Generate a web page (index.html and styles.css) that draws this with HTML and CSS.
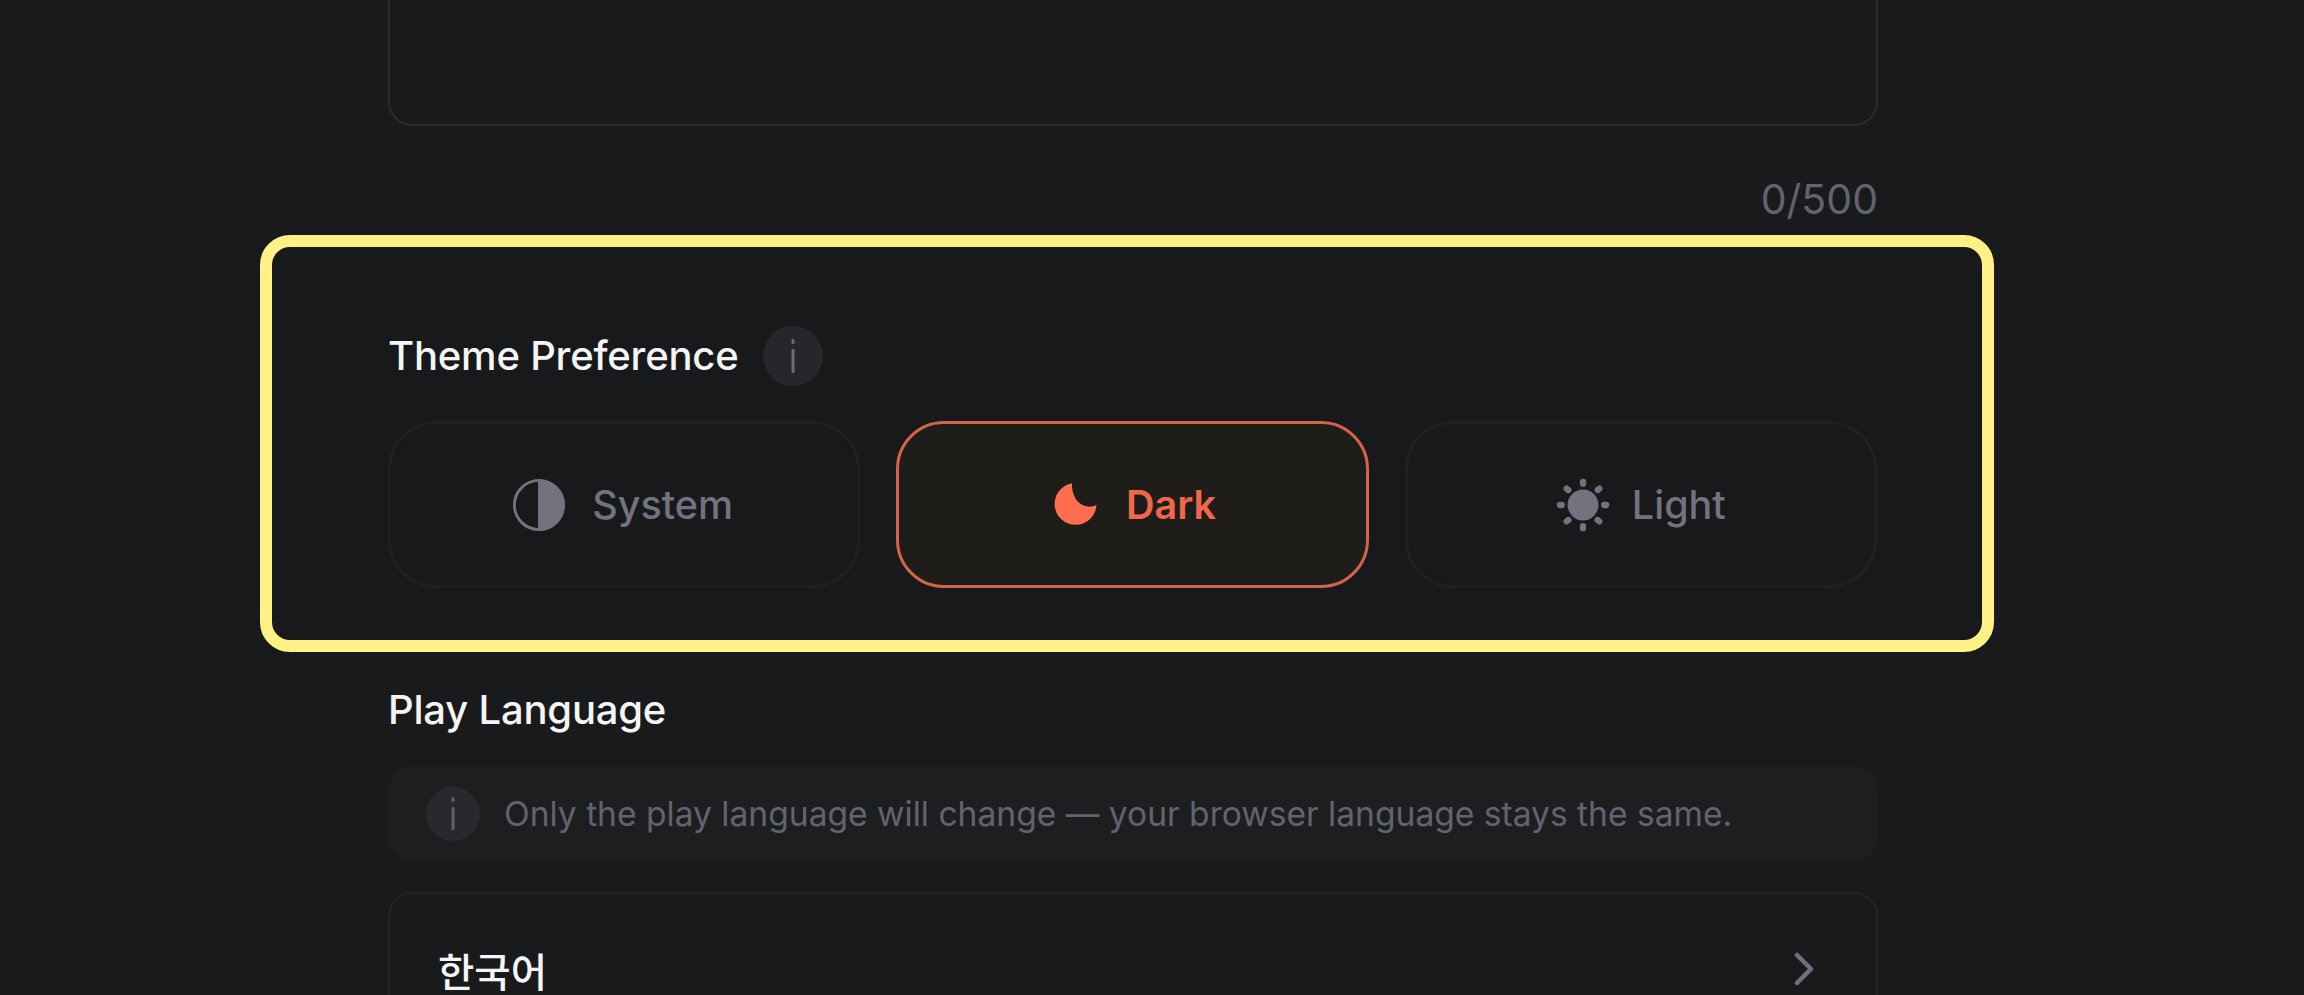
FILE: index.html
```html
<!DOCTYPE html>
<html lang="en">
<head>
  <meta charset="UTF-8" />
  <title>Settings</title>
  <link rel="stylesheet" href="styles.css">
</head>
<body>
  <div class="page">
    <div class="textbox"></div>
    <div class="counter">0/500</div>

    <section class="highlight">
      <div class="label-row">
        <h3 class="label">Theme Preference</h3>
        <span class="info-dot">
          <svg width="6" height="34" viewBox="0 0 6 34"><rect x="1.5" y="0" width="3" height="5" rx="1.5" fill="#6a6b78"/><rect x="1.5" y="10" width="3" height="24" rx="1" fill="#6a6b78"/></svg>
        </span>
      </div>
      <div class="themes">
        <button class="theme">
          <svg width="54" height="56" viewBox="0 0 56 56">
            <circle cx="28" cy="28" r="25.5" fill="none" stroke="#72737f" stroke-width="3"/>
            <path d="M28 2.5A25.5 25.5 0 0 1 28 53.5Z" fill="#72737f" stroke="#72737f" stroke-width="2"/>
          </svg>
          System
        </button>
        <button class="theme active">
          <svg width="54" height="56" viewBox="-3 0 56 56">
            <path d="M24 5.5A21.7 21.7 0 1 0 49.3 28C43 31 35.5 30 30.5 25C26 20.5 23.5 12 24 5.5Z" fill="#ff6e4f"/>
          </svg>
          Dark
        </button>
        <button class="theme light">
          <svg width="54" height="56" viewBox="0 0 56 56" fill="none" stroke="#72737f" stroke-width="6.5" stroke-linecap="round">
            <circle cx="28" cy="28" r="16" fill="#72737f" stroke="none"/>
            <path d="M28 4V6M28 50V52M4 28H6M50 28H52M11 11L12.8 12.4M45 11L43.2 12.4M11 45L12.8 43.6M45 45L43.2 43.6"/>
          </svg>
          Light
        </button>
      </div>
    </section>

    <h3 class="label play-label">Play Language</h3>

    <div class="notice">
      <span class="info-dot small">
        <svg width="6" height="33" viewBox="0 0 6 33"><rect x="1.5" y="0" width="3" height="5" rx="1.5" fill="#5e5f6b"/><rect x="1.5" y="10" width="3" height="23" rx="1" fill="#5e5f6b"/></svg>
      </span>
      <p>Only the play language will change — your browser language stays the same.</p>
    </div>

    <div class="lang-row">
      <span class="lang-name" lang="ko">한국어</span>
      <svg width="20" height="34" viewBox="0 0 20 34" fill="none" stroke="#6f707c" stroke-width="4.5" stroke-linecap="round" stroke-linejoin="round"><path d="M3 3L17 17L3 31"/></svg>
    </div>
  </div>
</body>
</html>
```

FILE: styles.css
```css
* { box-sizing: border-box; }

html, body {
  margin: 0;
  height: 995px;
  overflow: hidden;
  background: #191a1c;
}

body {
  font-family: Inter, "Noto Sans CJK KR", sans-serif;
  color: #f5f5f6;
}

.page {
  width: 1490px;
  margin-left: 388px;
}

.textbox {
  height: 166px;
  margin-top: -40px;
  border: 2px solid #2a2b2e;
  border-radius: 24px;
}

.counter {
  margin-top: 49px;
  height: 44px;
  line-height: 48px;
  text-align: right;
  font-size: 41px;
  color: #62636e;
}

.highlight {
  margin: 16px -116px 0 -128px;
  padding: 79px 105px 52px 116px;
  border: 12px solid #fff185;
  border-radius: 30px;
  background: #18191b;
}

.label-row {
  display: flex;
  align-items: center;
  gap: 25px;
  height: 60px;
}

.label {
  margin: 0;
  font-size: 40px;
  line-height: 48px;
  font-weight: 500;
  letter-spacing: -0.2px;
}

.info-dot {
  display: flex;
  align-items: center;
  justify-content: center;
  flex: none;
  width: 60px;
  height: 60px;
  border-radius: 50%;
  background: #26272b;
}

.info-dot.small {
  width: 54px;
  height: 54px;
  background: #28292d;
}

.themes {
  display: grid;
  grid-template-columns: repeat(3, 1fr);
  gap: 36px;
  margin-top: 35px;
}

.theme {
  display: flex;
  align-items: center;
  justify-content: center;
  gap: 26px;
  height: 167px;
  padding: 0 3px 0 0;
  border: 3px solid #1f2023;
  border-radius: 48px;
  background: transparent;
  color: #72737f;
  font-family: inherit;
  font-size: 39.5px;
  font-weight: 500;
}

.theme.light {
  gap: 22px;
  padding: 0;
}

.theme.active {
  border-color: #d4634a;
  background: #1f1d1a;
  color: #f0674a;
  font-weight: 600;
}

.play-label {
  margin-top: 34px;
}

.notice {
  display: flex;
  align-items: center;
  gap: 24px;
  height: 95px;
  margin-top: 32px;
  padding: 0 38px;
  border-radius: 24px;
  background: #1d1e20;
}

.notice p {
  margin: 0;
  font-size: 33.6px;
  color: #62636d;
}

.lang-row {
  display: flex;
  align-items: center;
  justify-content: space-between;
  height: 154px;
  margin-top: 31px;
  padding: 0 62px 0 48px;
  border: 2px solid #232427;
  border-radius: 24px;
}

.lang-name {
  font-size: 39.5px;
  font-weight: 500;
}
```
